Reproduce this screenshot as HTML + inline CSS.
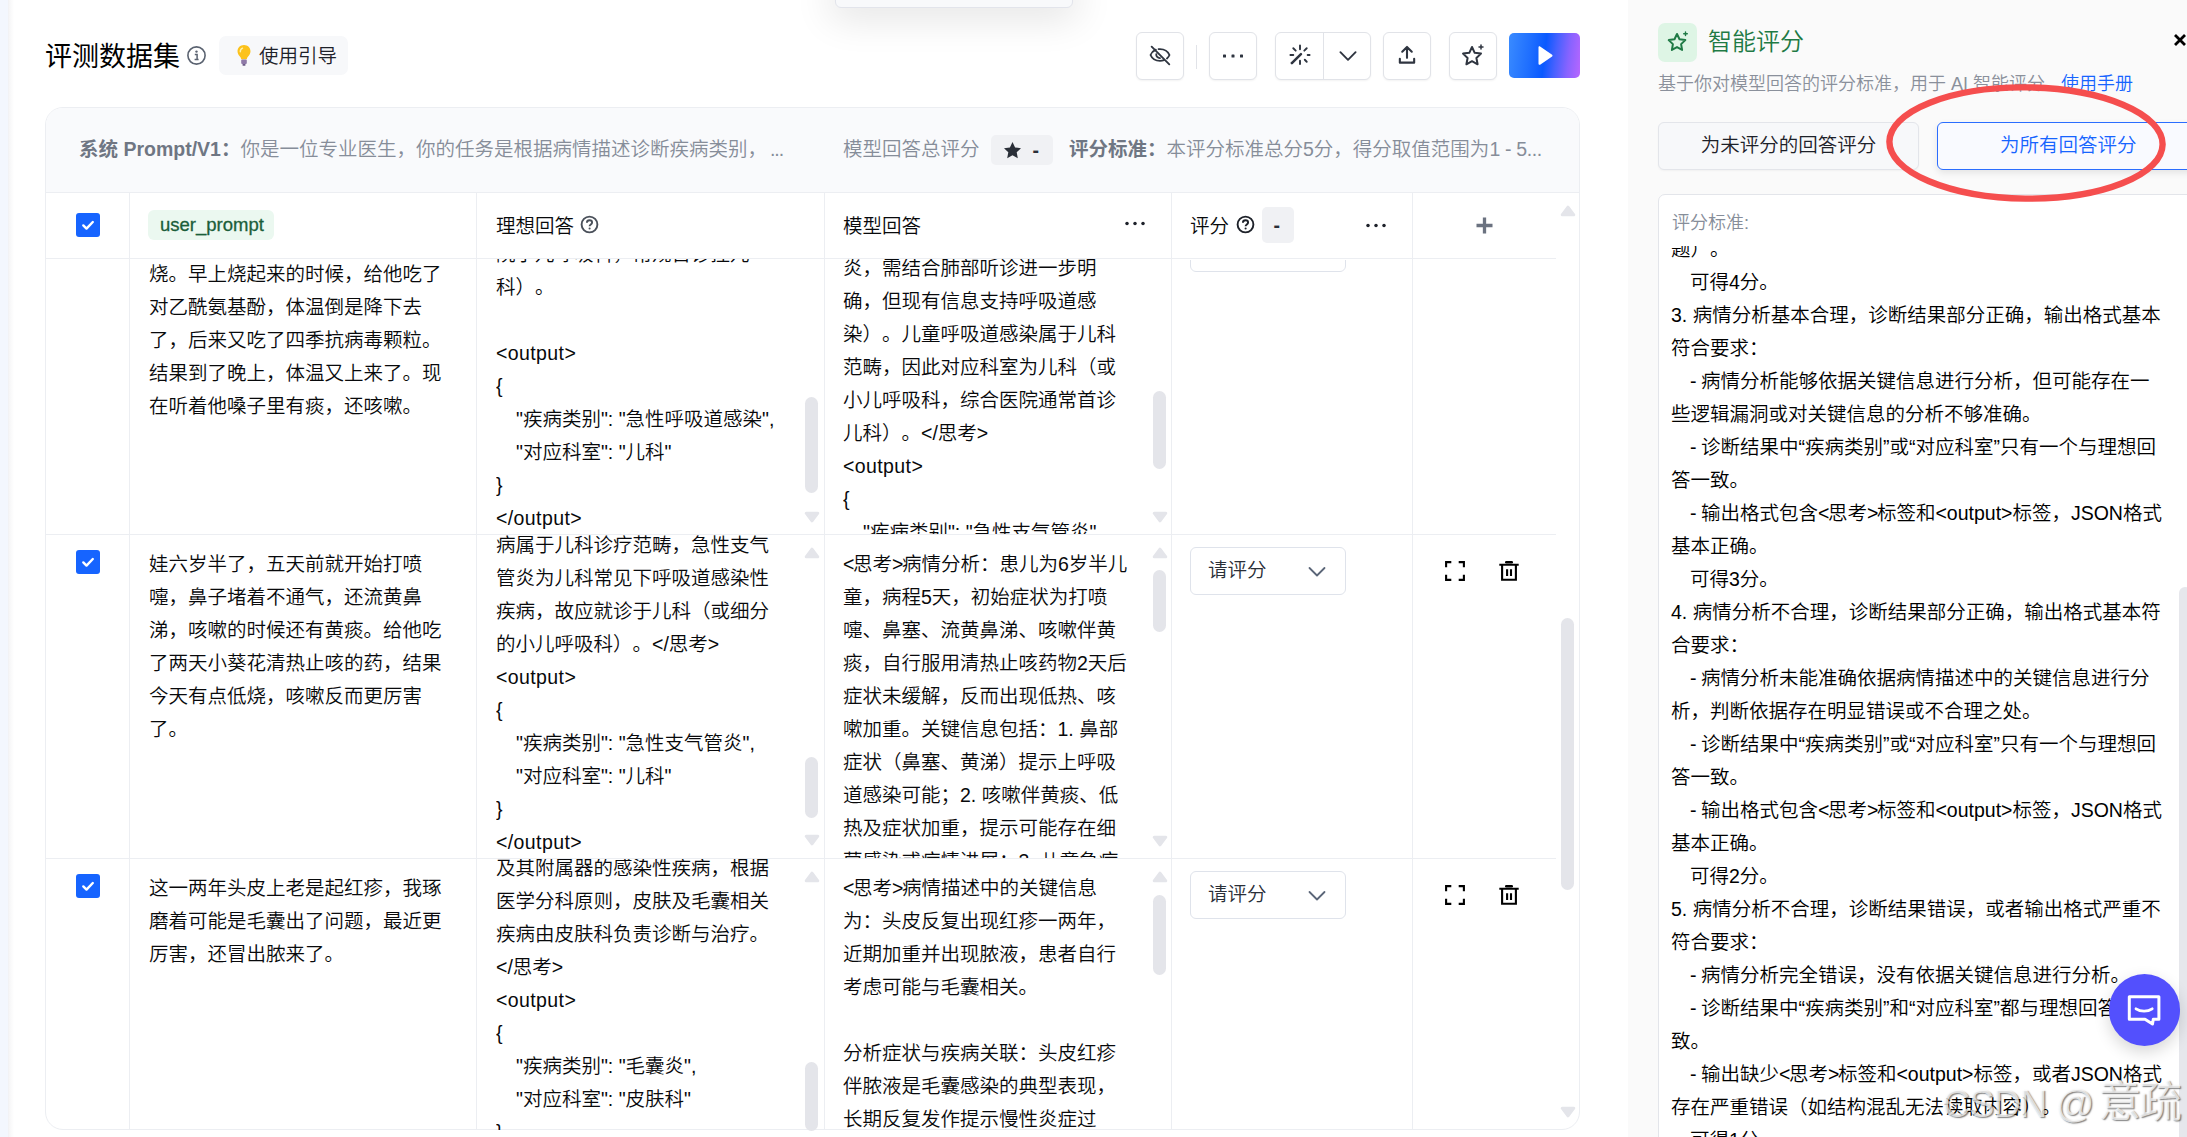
<!DOCTYPE html>
<html lang="zh-CN">
<head>
<meta charset="utf-8">
<title>评测数据集</title>
<style>
*{box-sizing:border-box;margin:0;padding:0}
html,body{width:2187px;height:1137px;overflow:hidden;background:#fff}
body{position:relative;font-family:"Liberation Sans","Noto Sans CJK SC",sans-serif;font-size:19.5px;line-height:33px;color:#08090b;font-weight:350;text-spacing-trim:space-all}
.abs{position:absolute}
#strip{left:0;top:0;width:8px;height:1137px;background:#f3f7fe}
#stripshadow{left:8px;top:0;width:6px;height:1137px;background:linear-gradient(90deg,#eceef3 0,#f5f5f6 12%,#fff 100%)}
#toptip{left:834.5px;top:-20px;width:238px;height:27.5px;background:#f8f9fb;border:1px solid #e2e4eb;border-radius:6px;box-shadow:0 6px 38px 5px rgba(0,0,0,.11)}
#title{left:45px;top:37px;font-size:27px;line-height:40px;color:#000;font-weight:400;white-space:nowrap}
#guide{left:219px;top:36px;width:129px;height:39px;background:#f7f8fa;border-radius:7px}
#guide span{position:absolute;left:40px;top:4px;font-size:19.5px;white-space:nowrap;color:#1d2129}
.tbtn{position:absolute;top:32px;width:48px;height:48px;background:#fff;border:1px solid #e1e3e8;border-radius:6px;box-shadow:0 1px 2px rgba(0,0,0,.05)}
.tbtn svg{position:absolute;left:50%;top:50%;transform:translate(-50%,-50%)}
#play{left:1509px;top:33px;width:71px;height:45px;border-radius:5px;background:linear-gradient(97deg,#3a8bff 0%,#1f6fff 30%,#0a59ff 50%,#4761ff 65%,#8863ff 82%,#b866ff 100%)}
/* card */
#card{left:45px;top:107px;width:1535px;height:1023px;border:1px solid #eceef2;border-radius:18px;background:#fff;overflow:hidden}
#cardhead{left:0;top:0;width:1535px;height:85px;background:#f9fafc;border-bottom:1px solid #eceef2}
.hgrey{color:#868d99;white-space:nowrap;font-size:19.5px}
.hbold{font-weight:bold;color:#6f7683}
.vline{position:absolute;top:193px;width:1px;height:936px;background:#eceef2}
.hline{position:absolute;left:46px;height:1px;background:#eceef2}
.cell{position:absolute;overflow:hidden}
.cell .t{position:absolute;left:0;white-space:nowrap}
.b{letter-spacing:-1.4px}
.cb{position:absolute;left:76px;width:24px;height:24px;border-radius:3px;background:#1664ff}
.cb svg{position:absolute;left:0;top:0}
.sel{position:absolute;left:1190px;width:156px;height:48px;border:1px solid #dfe3eb;border-radius:6px;background:#fff}
.sel span{position:absolute;left:17px;top:6px;white-space:nowrap;color:#2a2f38}
.sel svg{position:absolute;left:116px;top:18px}
.sb{position:absolute;width:13px;border-radius:6.5px;background:#e4e5ea}
.arr{position:absolute;width:0;height:0;border-left:7px solid transparent;border-right:7px solid transparent}
.arr.up{border-bottom:11px solid #e6e7ec}
.arr.dn{border-top:11px solid #e6e7ec}
/* right panel */
#rp{left:1628px;top:0;width:559px;height:1137px;background:#fafafa}
</style>
</head>
<body>
<div id="strip" class="abs"></div>
<div id="stripshadow" class="abs"></div>
<div id="toptip" class="abs"></div>
<div id="title" class="abs">评测数据集</div>
<svg class="abs" style="left:186px;top:45px" width="21" height="21" viewBox="0 0 21 21"><circle cx="10.5" cy="10.5" r="8.6" fill="none" stroke="#5a6270" stroke-width="1.6"/><circle cx="10.5" cy="6.6" r="1.2" fill="#5a6270"/><path d="M8.8 9.4h2.3v5M8.6 14.6h4" fill="none" stroke="#5a6270" stroke-width="1.5"/></svg>
<div id="guide" class="abs">
<svg class="abs" style="left:17px;top:8px" width="16" height="23" viewBox="0 0 16 23"><path d="M8 1C4.2 1 1.5 3.8 1.5 7.3c0 2.3 1.2 3.9 2.4 5.2.8.9 1.2 1.8 1.3 2.8h5.6c.1-1 .5-1.9 1.3-2.8 1.2-1.3 2.4-2.9 2.4-5.2C14.500 3.800 11.800 1 8 1z" fill="#fcc21b"/><path d="M6.500 4.200C5 4.900 4.200 6.200 4.300 7.800" stroke="#fff2b0" stroke-width="1.4" fill="none" stroke-linecap="round"/><rect x="5.200" y="15.600" width="5.600" height="4.400" rx="1" fill="#8f7aa8"/><rect x="6.400" y="20" width="3.200" height="1.800" rx=".8" fill="#6b5a85"/></svg>
<span>使用引导</span></div>
<div class="tbtn" style="left:1136px"><svg style="margin-top:-1px" width="26" height="26" viewBox="0 0 28 28" fill="none" stroke="#2f3540" stroke-width="2" stroke-linecap="round"><path d="M5 5l19 19"/><path d="M9.500 8.300C6.500 9.700 4.600 12.100 3.800 14c1.600 3.700 5.400 6.400 10.200 6.400 1.600 0 3-.3 4.300-.8"/><path d="M12.500 7.700c.5-.1 1-.1 1.500-.1 4.800 0 8.600 2.700 10.200 6.400-.6 1.400-1.500 2.700-2.700 3.700"/><path d="M10 13c-.3 2.500 1.500 4.400 4 4.300"/></svg></div>
<div class="abs" style="left:1196px;top:45px;width:1px;height:24px;background:#e1e3e8"></div>
<div class="tbtn" style="left:1209px"><svg width="24" height="6" viewBox="0 0 24 6" fill="#2f3540"><rect x="2" y="1.500" width="3" height="3" rx=".6"/><rect x="10.500" y="1.500" width="3" height="3" rx=".6"/><rect x="19" y="1.500" width="3" height="3" rx=".6"/></svg></div>
<div class="tbtn" style="left:1275px;width:96px"><div class="abs" style="left:47px;top:0;width:1px;height:46px;background:#e1e3e8"></div>
<svg style="left:24px;margin-top:-1px" width="23" height="23" viewBox="0 0 24 24" fill="none" stroke="#2f3540" stroke-width="2" stroke-linecap="round"><path d="M3.500 20.500l9.500-9.500" stroke-width="2.600"/><path d="M12 2v4M20 12h2M5 5l2.500 2.500M19 5l-2.500 2.500M17 17l2 2M2 12h3M12 18v3.500"/></svg>
<svg style="left:71.5px" width="19" height="11.4" viewBox="0 0 20 12" fill="none" stroke="#2f3540" stroke-width="2" stroke-linecap="round" stroke-linejoin="round"><path d="M2 2l8 8 8-8"/></svg></div>
<div class="tbtn" style="left:1383px"><svg style="margin-top:-1px" width="21" height="21" viewBox="0 0 22 22" fill="none" stroke="#2f3540" stroke-width="2.200" stroke-linecap="round" stroke-linejoin="round"><path d="M11 14V3M6 7.500l5-5 5 5M3.500 15v4h15v-4"/></svg></div>
<div class="tbtn" style="left:1449px"><svg width="26" height="26" viewBox="0 0 26 26" fill="none" stroke="#2f3540" stroke-width="2" stroke-linejoin="round" stroke-linecap="round"><path d="M12 4l2.700 5.800 6.300.8-4.600 4.400 1.200 6.300L12 18.200 6.400 21.300l1.200-6.300L3 10.600l6.300-.8z"/><path d="M21 2v4M19 4h4" stroke-width="1.500"/></svg></div>
<div id="play" class="abs"><svg class="abs" style="left:27px;top:12px" width="18" height="21" viewBox="0 0 18 21"><path d="M2.500 2.200v16.600c0 .8.900 1.300 1.600.9l12-8.300c.6-.4.6-1.300 0-1.700l-12-8.300c-.7-.500-1.600 0-1.600.8z" fill="#fff"/></svg></div>
<!--TOPBAR_END-->
<!--CARD_START-->
<div id="card" class="abs"><div id="cardhead" class="abs"></div></div>
<div class="abs hgrey" style="left:79px;top:133px"><span class="hbold">系统 Prompt/V1：</span>你是一位专业医生，你的任务是根据病情描述诊断疾病类别，<span style="letter-spacing:-1px;margin-left:3px">...</span></div>
<div class="abs hgrey" style="left:843px;top:133px">模型回答总评分</div>
<div class="abs" style="left:991px;top:135px;width:62px;height:30px;border-radius:5px;background:#f0f1f4"></div>
<svg class="abs" style="left:1003px;top:141px" width="19" height="18" viewBox="0 0 19 18"><path d="M9.500 1l2.600 5.400 5.900.8-4.300 4.100 1.100 5.900-5.300-2.900-5.300 2.900 1.100-5.900L1 7.200l5.900-.8z" fill="#2a2f38"/></svg>
<div class="abs" style="left:1032.500px;top:134px;color:#2a2f38;font-weight:bold">-</div>
<div class="abs hgrey" style="left:1069px;top:133px"><span class="hbold">评分标准：</span>本评分标准总分5分，得分取值范围为<span style="letter-spacing:-.35px">1 - 5...</span></div>
<div class="vline" style="left:129px"></div>
<div class="vline" style="left:476px"></div>
<div class="vline" style="left:824px"></div>
<div class="vline" style="left:1171px"></div>
<div class="vline" style="left:1412px"></div>
<div class="hline" style="top:258px;width:1510px"></div>
<div class="hline" style="top:534px;width:1510px"></div>
<div class="hline" style="top:858px;width:1510px"></div>
<div class="cb" style="top:213px"><svg width="24" height="24" viewBox="0 0 24 24"><path d="M7.300 12.400l3.200 3.200 6.300-6.600" fill="none" stroke="#fff" stroke-width="2.400" stroke-linecap="round" stroke-linejoin="round"/></svg></div>
<div class="abs" style="left:148px;top:210px;width:126px;height:30px;border-radius:6px;background:#ebf8f0"></div>
<div class="abs" style="left:160px;top:207.5px;font-size:18.5px;color:#1b5e3a;-webkit-text-stroke:.3px #1b5e3a;white-space:nowrap">user_prompt</div>
<div class="abs" style="left:496px;top:209.5px;white-space:nowrap">理想回答</div>
<svg class="abs" style="left:580px;top:215px" width="19" height="19" viewBox="0 0 19 19"><circle cx="9.500" cy="9.500" r="7.900" fill="none" stroke="#4a505a" stroke-width="1.900"/><path d="M6.900 7.700c0-1.500 1.100-2.500 2.600-2.500s2.600 1 2.600 2.300c0 1.900-2.500 2-2.500 3.800" fill="none" stroke="#4a505a" stroke-width="1.900"/><circle cx="9.600" cy="13.500" r="1.050" fill="#4a505a"/></svg>
<div class="abs" style="left:843px;top:209.5px;white-space:nowrap">模型回答</div>
<svg class="abs" style="left:1125px;top:221px" width="20" height="5" viewBox="0 0 20 5" fill="#1d2129"><circle cx="2" cy="2.500" r="1.750"/><circle cx="10" cy="2.500" r="1.750"/><circle cx="18" cy="2.500" r="1.750"/></svg>
<div class="abs" style="left:1190px;top:209.5px;white-space:nowrap">评分</div>
<svg class="abs" style="left:1236px;top:215px" width="19" height="19" viewBox="0 0 19 19"><circle cx="9.500" cy="9.500" r="7.900" fill="none" stroke="#1d2129" stroke-width="1.900"/><path d="M6.900 7.700c0-1.500 1.100-2.500 2.600-2.500s2.600 1 2.600 2.300c0 1.900-2.500 2-2.500 3.800" fill="none" stroke="#1d2129" stroke-width="1.900"/><circle cx="9.600" cy="13.500" r="1.050" fill="#1d2129"/></svg>
<div class="abs" style="left:1262px;top:207px;width:32px;height:36px;border-radius:5px;background:#f0f1f4"></div>
<div class="abs" style="left:1273.500px;top:209px;color:#2a2f38;font-weight:bold">-</div>
<svg class="abs" style="left:1366px;top:222.5px" width="20" height="5" viewBox="0 0 20 5" fill="#1d2129"><circle cx="2" cy="2.500" r="1.750"/><circle cx="10" cy="2.500" r="1.750"/><circle cx="18" cy="2.500" r="1.750"/></svg>
<svg class="abs" style="left:1476px;top:217px" width="17" height="17" viewBox="0 0 17 17"><path d="M8.500 .5v16M.5 8.500h16" stroke="#6b7280" stroke-width="3.300"/></svg>
<div class="cell" style="left:149px;top:259px;width:320px;height:275px">
<div class="t" style="top:-1px;left:0px">烧。早上烧起来的时候，给他吃了</div>
<div class="t" style="top:32px;left:0px">对乙酰氨基酚，体温倒是降下去</div>
<div class="t" style="top:65px;left:0px">了，后来又吃了四季抗病毒颗粒。</div>
<div class="t" style="top:98px;left:0px">结果到了晚上，体温又上来了。现</div>
<div class="t" style="top:131px;left:0px">在听着他嗓子里有痰，还咳嗽。</div>
</div>
<div class="cell" style="left:496px;top:259px;width:305px;height:275px">
<div class="t" style="top:-21px;left:0px">院小儿呼吸科，常规首诊挂儿</div>
<div class="t" style="top:12px;left:0px">科）。</div>
<div class="t" style="top:78px;left:0px;letter-spacing:.4px">&lt;output&gt;</div>
<div class="t" style="top:111px;left:0px">{</div>
<div class="t" style="top:144px;left:20px">"疾病类别": "急性呼吸道感染",</div>
<div class="t" style="top:177px;left:20px">"对应科室": "儿科"</div>
<div class="t" style="top:210px;left:0px">}</div>
<div class="t" style="top:243px;left:0px;letter-spacing:.4px">&lt;/output&gt;</div>
</div>
<div class="cell" style="left:843px;top:259px;width:305px;height:275px">
<div class="t" style="top:-7px;left:0px">炎，需结合肺部听诊进一步明</div>
<div class="t" style="top:26px;left:0px">确，但现有信息支持呼吸道感</div>
<div class="t" style="top:59px;left:0px">染）。儿童呼吸道感染属于儿科</div>
<div class="t" style="top:92px;left:0px">范畴，因此对应科室为儿科（或</div>
<div class="t" style="top:125px;left:0px">小儿呼吸科，综合医院通常首诊</div>
<div class="t" style="top:158px;left:0px">儿科）。&lt;/思考<span class="b">&gt;</span></div>
<div class="t" style="top:191px;left:0px;letter-spacing:.4px">&lt;output&gt;</div>
<div class="t" style="top:224px;left:0px">{</div>
<div class="t" style="top:257px;left:20px">"疾病类别": "急性支气管炎",</div>
</div>
<div class="cb" style="top:550px"><svg width="24" height="24" viewBox="0 0 24 24"><path d="M7.300 12.400l3.200 3.200 6.300-6.600" fill="none" stroke="#fff" stroke-width="2.400" stroke-linecap="round" stroke-linejoin="round"/></svg></div>
<div class="cell" style="left:149px;top:535px;width:320px;height:323px">
<div class="t" style="top:13px;left:0px">娃六岁半了，五天前就开始打喷</div>
<div class="t" style="top:46px;left:0px">嚏，鼻子堵着不通气，还流黄鼻</div>
<div class="t" style="top:79px;left:0px">涕，咳嗽的时候还有黄痰。给他吃</div>
<div class="t" style="top:112px;left:0px">了两天小葵花清热止咳的药，结果</div>
<div class="t" style="top:145px;left:0px">今天有点低烧，咳嗽反而更厉害</div>
<div class="t" style="top:178px;left:0px">了。</div>
</div>
<div class="cell" style="left:496px;top:535px;width:305px;height:323px">
<div class="t" style="top:-6px;left:0px">病属于儿科诊疗范畴，急性支气</div>
<div class="t" style="top:27px;left:0px">管炎为儿科常见下呼吸道感染性</div>
<div class="t" style="top:60px;left:0px">疾病，故应就诊于儿科（或细分</div>
<div class="t" style="top:93px;left:0px">的小儿呼吸科）。&lt;/思考<span class="b">&gt;</span></div>
<div class="t" style="top:126px;left:0px;letter-spacing:.4px">&lt;output&gt;</div>
<div class="t" style="top:159px;left:0px">{</div>
<div class="t" style="top:192px;left:20px">"疾病类别": "急性支气管炎",</div>
<div class="t" style="top:225px;left:20px">"对应科室": "儿科"</div>
<div class="t" style="top:258px;left:0px">}</div>
<div class="t" style="top:291px;left:0px;letter-spacing:.4px">&lt;/output&gt;</div>
</div>
<div class="cell" style="left:843px;top:535px;width:305px;height:323px">
<div class="t" style="top:13px;left:0px"><span class="b">&lt;</span>思考<span class="b">&gt;</span>病情分析：患儿为6岁半儿</div>
<div class="t" style="top:46px;left:0px">童，病程5天，初始症状为打喷</div>
<div class="t" style="top:79px;left:0px">嚏、鼻塞、流黄鼻涕、咳嗽伴黄</div>
<div class="t" style="top:112px;left:0px">痰，自行服用清热止咳药物2天后</div>
<div class="t" style="top:145px;left:0px">症状未缓解，反而出现低热、咳</div>
<div class="t" style="top:178px;left:0px">嗽加重。关键信息包括：1. 鼻部</div>
<div class="t" style="top:211px;left:0px">症状（鼻塞、黄涕）提示上呼吸</div>
<div class="t" style="top:244px;left:0px">道感染可能；2. 咳嗽伴黄痰、低</div>
<div class="t" style="top:277px;left:0px">热及症状加重，提示可能存在细</div>
<div class="t" style="top:310px;left:0px">菌感染或病情进展；3. 儿童急病</div>
</div>
<div class="cb" style="top:874px"><svg width="24" height="24" viewBox="0 0 24 24"><path d="M7.300 12.400l3.200 3.200 6.300-6.600" fill="none" stroke="#fff" stroke-width="2.400" stroke-linecap="round" stroke-linejoin="round"/></svg></div>
<div class="cell" style="left:149px;top:859px;width:320px;height:271px">
<div class="t" style="top:13px;left:0px">这一两年头皮上老是起红疹，我琢</div>
<div class="t" style="top:46px;left:0px">磨着可能是毛囊出了问题，最近更</div>
<div class="t" style="top:79px;left:0px">厉害，还冒出脓来了。</div>
</div>
<div class="cell" style="left:496px;top:859px;width:305px;height:271px">
<div class="t" style="top:-7px;left:0px">及其附属器的感染性疾病，根据</div>
<div class="t" style="top:26px;left:0px">医学分科原则，皮肤及毛囊相关</div>
<div class="t" style="top:59px;left:0px">疾病由皮肤科负责诊断与治疗。</div>
<div class="t" style="top:92px;left:0px">&lt;/思考<span class="b">&gt;</span></div>
<div class="t" style="top:125px;left:0px;letter-spacing:.4px">&lt;output&gt;</div>
<div class="t" style="top:158px;left:0px">{</div>
<div class="t" style="top:191px;left:20px">"疾病类别": "毛囊炎",</div>
<div class="t" style="top:224px;left:20px">"对应科室": "皮肤科"</div>
<div class="t" style="top:257px;left:0px">}</div>
</div>
<div class="cell" style="left:843px;top:859px;width:305px;height:271px">
<div class="t" style="top:13px;left:0px"><span class="b">&lt;</span>思考<span class="b">&gt;</span>病情描述中的关键信息</div>
<div class="t" style="top:46px;left:0px">为：头皮反复出现红疹一两年，</div>
<div class="t" style="top:79px;left:0px">近期加重并出现脓液，患者自行</div>
<div class="t" style="top:112px;left:0px">考虑可能与毛囊相关。</div>
<div class="t" style="top:178px;left:0px">分析症状与疾病关联：头皮红疹</div>
<div class="t" style="top:211px;left:0px">伴脓液是毛囊感染的典型表现，</div>
<div class="t" style="top:244px;left:0px">长期反复发作提示慢性炎症过</div>
</div>
<div class="abs" style="left:1190px;top:224px;width:156px;height:48px;border:1px solid #dfe3eb;border-radius:6px;background:#fff;clip-path:inset(36px 0 0 0)"></div>
<div class="sel" style="top:547px"><span>请评分</span><svg width="20" height="12" viewBox="0 0 20 12" fill="none" stroke="#5b6678" stroke-width="1.800" stroke-linecap="round" stroke-linejoin="round"><path d="M2.500 2l7.500 7.500L17.500 2"/></svg></div>
<div class="sel" style="top:871px"><span>请评分</span><svg width="20" height="12" viewBox="0 0 20 12" fill="none" stroke="#5b6678" stroke-width="1.800" stroke-linecap="round" stroke-linejoin="round"><path d="M2.500 2l7.500 7.500L17.500 2"/></svg></div>
<svg class="abs" style="left:1445px;top:561px" width="20" height="20" viewBox="0 0 20 20" fill="none" stroke="#000" stroke-width="2.100"><path d="M1.100 6.300V1.100H6.300M13.700 1.100h5.200V6.300M18.900 13.700v5.200H13.700M6.300 18.900H1.100V13.700"/></svg>
<svg class="abs" style="left:1499px;top:561px" width="20" height="20" viewBox="0 0 20 20" fill="none" stroke="#000" stroke-width="2.100"><path d="M7.200 1.300h5.600" stroke-width="2.400" stroke-linecap="round"/><path d="M.3 3.700h19.400M3.100 4v14.800h13.800V4M8.100 8.300v6.600M12 8.300v6.600"/></svg>
<svg class="abs" style="left:1445px;top:885px" width="20" height="20" viewBox="0 0 20 20" fill="none" stroke="#000" stroke-width="2.100"><path d="M1.100 6.300V1.100H6.300M13.700 1.100h5.200V6.300M18.900 13.700v5.200H13.700M6.300 18.900H1.100V13.700"/></svg>
<svg class="abs" style="left:1499px;top:885px" width="20" height="20" viewBox="0 0 20 20" fill="none" stroke="#000" stroke-width="2.100"><path d="M7.200 1.300h5.600" stroke-width="2.400" stroke-linecap="round"/><path d="M.3 3.700h19.400M3.100 4v14.800h13.800V4M8.100 8.300v6.600M12 8.300v6.600"/></svg>
<div class="sb" style="left:805px;top:397px;height:96px"></div>
<svg class="abs" style="left:803.5px;top:511px" width="16" height="12" viewBox="0 0 16 12"><path d="M8 9.800L13.800 2.200H2.200Z" fill="#e4e5ea" stroke="#e4e5ea" stroke-width="3" stroke-linejoin="round"/></svg>
<div class="sb" style="left:1153px;top:391px;height:78px"></div>
<svg class="abs" style="left:1152px;top:511px" width="16" height="12" viewBox="0 0 16 12"><path d="M8 9.800L13.800 2.200H2.200Z" fill="#e4e5ea" stroke="#e4e5ea" stroke-width="3" stroke-linejoin="round"/></svg>
<svg class="abs" style="left:803.5px;top:547px" width="16" height="12" viewBox="0 0 16 12"><path d="M8 2.200L13.800 9.800H2.200Z" fill="#e4e5ea" stroke="#e4e5ea" stroke-width="3" stroke-linejoin="round"/></svg>
<div class="sb" style="left:805px;top:757px;height:61px"></div>
<svg class="abs" style="left:803.5px;top:834px" width="16" height="12" viewBox="0 0 16 12"><path d="M8 9.800L13.800 2.200H2.200Z" fill="#e4e5ea" stroke="#e4e5ea" stroke-width="3" stroke-linejoin="round"/></svg>
<svg class="abs" style="left:1152px;top:547px" width="16" height="12" viewBox="0 0 16 12"><path d="M8 2.200L13.800 9.800H2.200Z" fill="#e4e5ea" stroke="#e4e5ea" stroke-width="3" stroke-linejoin="round"/></svg>
<div class="sb" style="left:1153px;top:570px;height:62px"></div>
<svg class="abs" style="left:1152px;top:835px" width="16" height="12" viewBox="0 0 16 12"><path d="M8 9.800L13.800 2.200H2.200Z" fill="#e4e5ea" stroke="#e4e5ea" stroke-width="3" stroke-linejoin="round"/></svg>
<svg class="abs" style="left:803.5px;top:871px" width="16" height="12" viewBox="0 0 16 12"><path d="M8 2.200L13.800 9.800H2.200Z" fill="#e4e5ea" stroke="#e4e5ea" stroke-width="3" stroke-linejoin="round"/></svg>
<div class="sb" style="left:805px;top:1062px;height:69px"></div>
<svg class="abs" style="left:1152px;top:871px" width="16" height="12" viewBox="0 0 16 12"><path d="M8 2.200L13.800 9.800H2.200Z" fill="#e4e5ea" stroke="#e4e5ea" stroke-width="3" stroke-linejoin="round"/></svg>
<div class="sb" style="left:1153px;top:895px;height:80px"></div>
<svg class="abs" style="left:1560px;top:205px" width="16" height="12" viewBox="0 0 16 12"><path d="M8 2.200L13.800 9.800H2.200Z" fill="#e4e5ea" stroke="#e4e5ea" stroke-width="3" stroke-linejoin="round"/></svg>
<div class="sb" style="left:1561px;top:618px;height:272px"></div>
<svg class="abs" style="left:1560px;top:1106px" width="16" height="12" viewBox="0 0 16 12"><path d="M8 9.800L13.800 2.200H2.200Z" fill="#e4e5ea" stroke="#e4e5ea" stroke-width="3" stroke-linejoin="round"/></svg>
<!--CARD_END-->
<!--RIGHT_START-->
<div id="rp" class="abs"></div>
<div class="abs" style="left:1658px;top:23px;width:39px;height:39px;border-radius:7px;background:#def5e5"></div>
<svg class="abs" style="left:1665px;top:29px" width="26" height="26" viewBox="0 0 26 26" fill="none" stroke="#1f7a45" stroke-width="2" stroke-linejoin="round" stroke-linecap="round"><path d="M12 5l2.500 5.300 5.800.8-4.200 4 1 5.800-5.100-2.800-5.100 2.800 1-5.800-4.200-4 5.800-.8z"/><path d="M20.500 3v3.600M18.700 4.800h3.600" stroke-width="1.400"/></svg>
<div class="abs" style="left:1708px;top:23px;font-size:24px;line-height:38px;color:#1f7a45;white-space:nowrap">智能评分</div>
<svg class="abs" style="left:2173px;top:33px" width="14" height="14" viewBox="0 0 14 14"><path d="M2 2l10 10M12 2L2 12" stroke="#000" stroke-width="2.800"/></svg>
<div class="abs" style="left:1658px;top:67.5px;font-size:18px;color:#8a909b;white-space:nowrap">基于你对模型回答的评分标准，用于 AI 智能评分。<span style="color:#1664ff;margin-left:-2px">使用手册</span></div>
<div class="abs" style="left:1658px;top:122px;width:261px;height:48px;border:1px solid #e3e5ea;border-radius:6px;background:#f7f8fa;text-align:center;line-height:45px;color:#1d2129;white-space:nowrap;box-shadow:0 1px 2px rgba(0,0,0,.04)">为未评分的回答评分</div>
<div class="abs" style="left:1937px;top:122px;width:262px;height:48px;border:1.500px solid #2b6dff;border-radius:6px;background:#f9faff;line-height:44px;color:#1664ff;white-space:nowrap;box-shadow:0 3px 7px rgba(0,0,0,.09);padding-left:62px">为所有回答评分</div>
<div class="abs" style="left:1658px;top:194px;width:540px;height:960px;border:1px solid #e3e5ea;border-radius:7px;background:#fff"></div>
<div class="abs" style="left:1672px;top:206.5px;font-size:18px;color:#868d99;white-space:nowrap">评分标准:</div>
<div class="cell" style="left:1671px;top:246px;width:516px;height:891px;color:#000">
<div class="t" style="top:-13px;left:0px">题）。</div>
<div class="t" style="top:20px;left:19px">可得4分。</div>
<div class="t" style="top:53px;left:0px">3. 病情分析基本合理，诊断结果部分正确，输出格式基本</div>
<div class="t" style="top:86px;left:0px">符合要求：</div>
<div class="t" style="top:119px;left:19px"><span style="letter-spacing:-.5px">- </span>病情分析能够依据关键信息进行分析，但可能存在一</div>
<div class="t" style="top:152px;left:0px">些逻辑漏洞或对关键信息的分析不够准确。</div>
<div class="t" style="top:185px;left:19px"><span style="letter-spacing:-.5px">- </span>诊断结果中“疾病类别”或“对应科室”只有一个与理想回</div>
<div class="t" style="top:218px;left:0px">答一致。</div>
<div class="t" style="top:251px;left:19px"><span style="letter-spacing:-.5px">- </span>输出格式包含<span class="b">&lt;</span>思考<span class="b">&gt;</span>标签和&lt;output&gt;标签，JSON格式</div>
<div class="t" style="top:284px;left:0px">基本正确。</div>
<div class="t" style="top:317px;left:19px">可得3分。</div>
<div class="t" style="top:350px;left:0px">4. 病情分析不合理，诊断结果部分正确，输出格式基本符</div>
<div class="t" style="top:383px;left:0px">合要求：</div>
<div class="t" style="top:416px;left:19px"><span style="letter-spacing:-.5px">- </span>病情分析未能准确依据病情描述中的关键信息进行分</div>
<div class="t" style="top:449px;left:0px">析，判断依据存在明显错误或不合理之处。</div>
<div class="t" style="top:482px;left:19px"><span style="letter-spacing:-.5px">- </span>诊断结果中“疾病类别”或“对应科室”只有一个与理想回</div>
<div class="t" style="top:515px;left:0px">答一致。</div>
<div class="t" style="top:548px;left:19px"><span style="letter-spacing:-.5px">- </span>输出格式包含<span class="b">&lt;</span>思考<span class="b">&gt;</span>标签和&lt;output&gt;标签，JSON格式</div>
<div class="t" style="top:581px;left:0px">基本正确。</div>
<div class="t" style="top:614px;left:19px">可得2分。</div>
<div class="t" style="top:647px;left:0px">5. 病情分析不合理，诊断结果错误，或者输出格式严重不</div>
<div class="t" style="top:680px;left:0px">符合要求：</div>
<div class="t" style="top:713px;left:19px"><span style="letter-spacing:-.5px">- </span>病情分析完全错误，没有依据关键信息进行分析。</div>
<div class="t" style="top:746px;left:19px"><span style="letter-spacing:-.5px">- </span>诊断结果中“疾病类别”和“对应科室”都与理想回答不一</div>
<div class="t" style="top:779px;left:0px">致。</div>
<div class="t" style="top:812px;left:19px"><span style="letter-spacing:-.5px">- </span>输出缺少<span class="b">&lt;</span>思考<span class="b">&gt;</span>标签和&lt;output&gt;标签，或者JSON格式</div>
<div class="t" style="top:845px;left:0px">存在严重错误（如结构混乱无法读取内容）。</div>
<div class="t" style="top:878px;left:19px">可得1分。</div>
</div>
<div class="abs" style="left:2179px;top:587px;width:12px;height:560px;border-radius:6px;background:#e6e7ec"></div>
<svg class="abs" style="left:1870px;top:70px" width="317" height="150" viewBox="0 0 317 150"><ellipse cx="156" cy="73" rx="136.600" ry="55.600" fill="none" stroke="#f54e4e" stroke-width="6.400" transform="rotate(.6 156 73)"/></svg>
<div class="abs" style="left:2108.500px;top:974px;width:71.500px;height:71.500px;border-radius:36px;background:#5350fd;box-shadow:0 6px 16px rgba(0,0,0,.16)"></div>
<svg class="abs" style="left:2126px;top:993px" width="36" height="34" viewBox="0 0 36 34" fill="none" stroke="#fff" stroke-width="3" stroke-linejoin="round" stroke-linecap="round"><path d="M3.300 3.700H32.900V26.200H27.300L26.500 31 19 26.200H3.300z"/><path d="M10 15.800c4.600 3.200 11.600 3.200 16.200 0" stroke-width="2.800"/></svg>
<div id="wm" class="abs" style="left:1942.500px;top:1076px;font-size:43px;line-height:52px;font-weight:400;color:rgba(255,255,255,.74);white-space:nowrap;letter-spacing:-2.500px;text-shadow:1.300px 1.300px 1.300px rgba(0,0,0,.5)"><span style="font-size:38px;letter-spacing:-1px">CSDN @</span><span style="margin-left:5px">意疏</span></div>
<!--RIGHT_END-->
</body>
</html>
